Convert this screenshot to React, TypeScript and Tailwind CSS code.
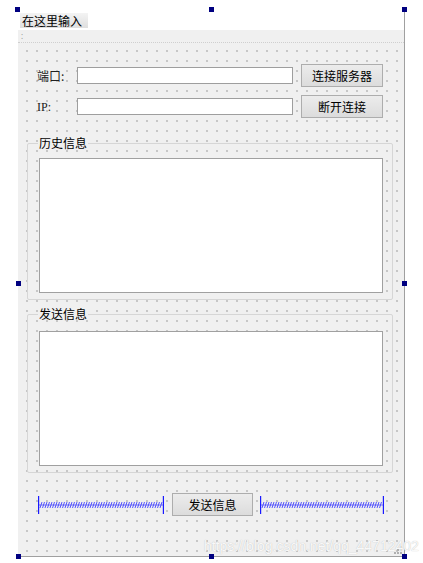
import React from "react";

const cjk = { fontFamily: '"Noto Sans CJK SC", "Noto Sans", sans-serif' };

function Spacer({ w }: { w: number }) {
  const lines = [];
  for (let x = 2; x < w - 2; x += 2.5) {
    lines.push(<line key={x} x1={x} y1={12} x2={x + 2} y2={6} />);
  }
  return (
    <svg width={w} height={18} className="shrink-0">
      <g stroke="#3030ff" strokeWidth={0.8}>
        {lines}
        <line x1={1} y1={9} x2={w - 1} y2={9} strokeWidth={0.6} />
      </g>
      <g stroke="#1a1aff" strokeWidth={1.2}>
        <line x1={0.6} y1={0} x2={0.6} y2={18} />
        <line x1={w - 0.6} y1={0} x2={w - 0.6} y2={18} />
      </g>
    </svg>
  );
}

function Btn({ w, children }: { w: string; children: React.ReactNode }) {
  return (
    <div
      className={`${w} h-[23px] shrink-0 flex items-center justify-center border border-[#adadad] bg-[linear-gradient(#ececec,#dcdcdc)] text-[12px] text-black`}
      style={cjk}
    >
      {children}
    </div>
  );
}

function Handle({ cls }: { cls: string }) {
  return <div className={`absolute w-[5px] h-[5px] bg-[#000080] ${cls}`} />;
}

export default function App() {
  return (
    <div className="relative w-[423px] h-[563px] bg-white overflow-hidden">
      <div className="ml-[18px] mt-[10px] w-[387px] h-[547px] flex flex-col border-r border-b border-[#a0a0a0] bg-[#f0f0f0]">
        {/* menu bar */}
        <div className="h-[20px] bg-white flex items-start">
          <div
            className="ml-[2px] mt-[3px] w-[68px] h-[15px] flex items-center pl-[2px] text-[12px] leading-none text-black bg-[linear-gradient(#f4f4f4,#dedede)]"
            style={cjk}
          >
            在这里输入
          </div>
        </div>
        {/* toolbar */}
        <div className="h-[13px] bg-[#f0f0f0] flex items-center pl-[3px] border-b border-dotted border-[#cfcfcf]">
          <span className="text-[8px] leading-none text-[#909090]">:</span>
        </div>
        {/* central widget */}
        <div className="flex-1 flex flex-col bg-[radial-gradient(circle,#c6c6c6_0.7px,transparent_0.9px)] bg-size-[10px_10px] bg-[position:4px_3px]">
          <div className="pt-[21px] pl-[19px] flex flex-col gap-[8px]">
            <div className="flex items-center">
              <div className="w-[40px] text-[12px] text-[#202020]" style={cjk}>
                端口:
              </div>
              <div className="w-[216px] h-[17px] bg-white border border-[#9e9e9e]" />
              <div className="w-[8px]" />
              <Btn w="w-[82px]">连接服务器</Btn>
            </div>
            <div className="flex items-center">
              <div
                className="w-[40px] text-[12px] text-[#202020]"
                style={{ fontFamily: '"Liberation Serif", "Noto Sans CJK SC", serif' }}
              >
                IP:
              </div>
              <div className="w-[216px] h-[17px] bg-white border border-[#9e9e9e]" />
              <div className="w-[8px]" />
              <Btn w="w-[82px]">断开连接</Btn>
            </div>
          </div>

          {/* history group */}
          <div className="ml-[9px] mt-[25px] w-[366px] border border-[#d6d6d6] rounded-[2px] pb-[6px]">
            <div
              className="-mt-[7px] ml-[10px] h-[12px] w-fit px-[1px] text-[12px] leading-[12px] text-black bg-[#f0f0f0]"
              style={cjk}
            >
              历史信息
            </div>
            <div className="ml-[11px] mt-[9px] w-[344px] h-[135px] bg-white border border-[#a0a0a0]" />
          </div>

          {/* send group */}
          <div className="ml-[9px] mt-[14px] w-[366px] border border-[#d6d6d6] rounded-[2px] pb-[6px]">
            <div
              className="-mt-[7px] ml-[10px] h-[12px] w-fit px-[1px] text-[12px] leading-[12px] text-black bg-[#f0f0f0]"
              style={cjk}
            >
              发送信息
            </div>
            <div className="ml-[11px] mt-[11px] w-[344px] h-[135px] bg-white border border-[#a0a0a0]" />
          </div>

          {/* bottom row */}
          <div className="mt-[20px] ml-[20px] flex items-center">
            <Spacer w={126} />
            <div className="w-[8px]" />
            <Btn w="w-[81px]">发送信息</Btn>
            <div className="w-[7px]" />
            <Spacer w={124} />
          </div>
        </div>
      </div>

      {/* size grip */}
      <div className="absolute left-[394px] top-[546px] grid grid-cols-3 gap-[1px]">
        {[0, 1, 2, 3, 4, 5, 6, 7, 8].map((i) => (
          <div key={i} className={`w-[2px] h-[2px] ${i === 0 || i === 1 || i === 3 ? "bg-transparent" : "bg-[#b0b0b0]"}`} />
        ))}
      </div>

      {/* watermark */}
      <div
        className="absolute left-[204px] top-[536px] text-[14px] text-white/90 [text-shadow:0_0_1px_#b0b0b0] whitespace-nowrap"
        style={{ fontFamily: '"Liberation Sans", sans-serif' }}
      >
        https://blog.csdn.net/qq_44712402
      </div>

      {/* selection handles */}
      <Handle cls="left-[15px] top-[7px]" />
      <Handle cls="left-[209px] top-[7px]" />
      <Handle cls="left-[402px] top-[7px]" />
      <Handle cls="left-[16px] top-[281px]" />
      <Handle cls="left-[402px] top-[281px]" />
      <Handle cls="left-[16px] top-[554px]" />
      <Handle cls="left-[209px] top-[554px]" />
      <Handle cls="left-[402px] top-[554px]" />
    </div>
  );
}
